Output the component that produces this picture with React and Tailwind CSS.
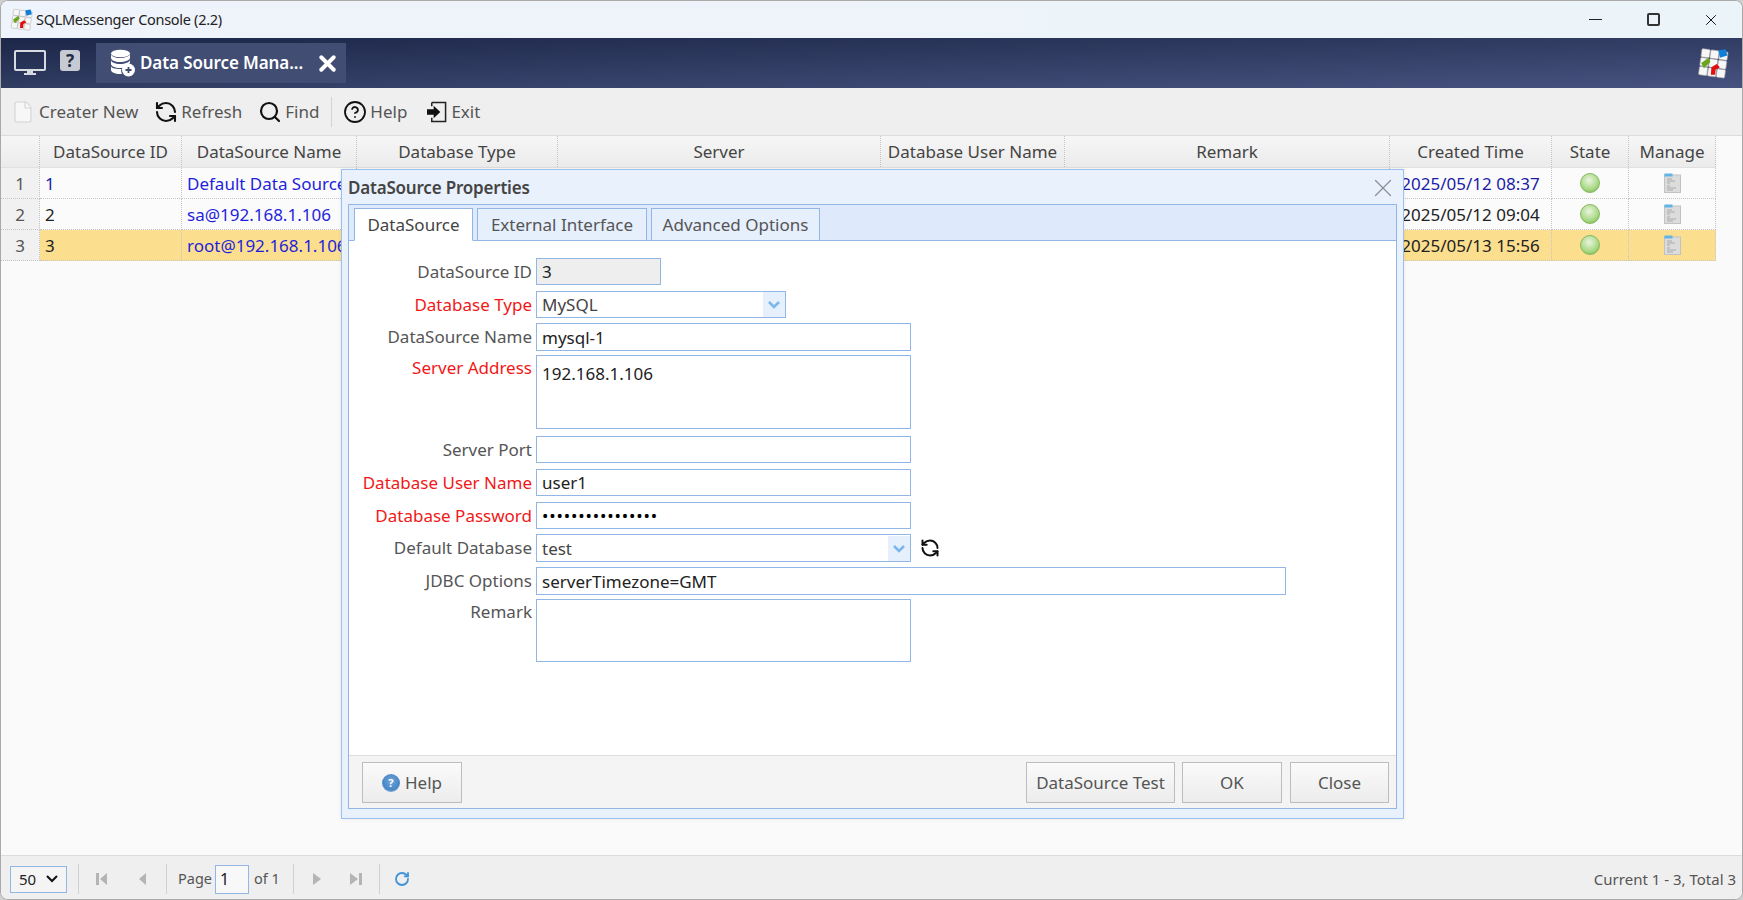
import React from "react";
import { RefreshCcw, Search, CircleHelp, File, X, RotateCw } from "lucide-react";

const cols = ["w-[39px]", "w-[142px]", "w-[175px]", "w-[201px]", "w-[323px]", "w-[184px]", "w-[325px]", "w-[162px]", "w-[77px]", "w-[87px]"];
const heads = ["", "DataSource ID", "DataSource Name", "Database Type", "Server", "Database User Name", "Remark", "Created Time", "State", "Manage"];

const rows = [
  { n: "1", id: "1", name: "Default Data Source", time: "2025/05/12 08:37", idC: "text-[#1c1ca8]", timeC: "text-[#1c1ca8]", bg: "bg-[#fbfbfb]" },
  { n: "2", id: "2", name: "sa@192.168.1.106", time: "2025/05/12 09:04", idC: "text-[#222]", timeC: "text-[#222]", bg: "bg-[#fbfbfb]" },
  { n: "3", id: "3", name: "root@192.168.1.106", time: "2025/05/13 15:56", idC: "text-[#222]", timeC: "text-[#222]", bg: "bg-[#fbdf8f]" },
];

function Logo({ size = 26 }) {
  const cells = [];
  for (let r = 0; r < 3; r++) for (let c = 0; c < 3; c++) cells.push([c, r]);
  return (
    <svg width={size} height={size} viewBox="0 0 30 30">
      <g transform="rotate(8 15 15)">
        {cells.map(([c, r]) => (
          <rect key={c + "-" + r} x={3 + c * 8.4} y={3 + r * 8.4} width="7.8" height="7.8" rx="1" fill="#f7f7f7" stroke="#a8a8a8" strokeWidth="0.6" />
        ))}
      </g>
      <path d="M20 3l7-1 1.500 6-7 2z" fill="#0f80d8" />
      <path d="M4 15l7-5 1.500 4-6 6z" fill="#6aa51c" />
      <path d="M13 26l.5-7 5-3 3 3-4 2-.5 5z" fill="#e30d0d" />
    </svg>
  );
}

function DbIcon() {
  return (
    <svg width="26" height="28" viewBox="0 0 26 28">
      <path d="M2 5v4c0 2 4 4 9 4s10-2 10-4V5c0 2-5 4-10 4S2 7 2 5z" fill="#fff" />
      <ellipse cx="11.5" cy="4.5" rx="9.5" ry="3.8" fill="#fff" />
      <path d="M2 11v4c0 2 4 4 9 4 2 0 4-.3 5-1l5-4v-3c0 2-5 4-10 4S2 13 2 11z" fill="#fff" />
      <path d="M2 17v4c0 2 4 4 9 4h2c-1-2-1-4-.5-5H11c-5 0-9-1-9-3z" fill="#fff" />
      <circle cx="19.5" cy="21" r="6.5" fill="#fff" />
      <path d="M16.5 21h6M19.5 18v6" stroke="#3f4c72" strokeWidth="1.8" />
    </svg>
  );
}

function ExitIcon() {
  return (
    <svg width="20" height="22" viewBox="0 0 21 22" className="-mr-[2px]">
      <path d="M5 1h14.5v20H5v-4M5 5V1" fill="none" stroke="#222" strokeWidth="1.6" />
      <path d="M0 8h7V4.5L14 11l-7 6.500V14H0z" fill="#111" />
    </svg>
  );
}

function ManageIcon() {
  return (
    <svg width="17" height="20" viewBox="0 0 17 20">
      <rect x="0.500" y="2" width="16" height="17.500" fill="#dcdcdc" stroke="#c2c2c2" />
      <rect x="0.500" y="0.500" width="8" height="3" fill="#62b4e6" />
      <path d="M3 6h5M3 8h8M3 10h3M3 13h3M3 15h9M3 17h6" stroke="#a4a4a4" strokeWidth="0.9" />
    </svg>
  );
}

function Ball() {
  return <div className="w-[20px] h-[20px] rounded-full border border-[#84b860] bg-[radial-gradient(circle_at_45%_35%,#e9f5de_0%,#a9d884_60%,#6aad3a_100%)]" />;
}

function ToolItem({ icon, label, className = "" }) {
  return (
    <div className={"flex items-center gap-[6px] text-[#555] " + className}>
      {icon}
      <span className="pt-[1px]">{label}</span>
    </div>
  );
}

function Chevron() {
  return (
    <svg width="14" height="10" viewBox="0 0 14 10">
      <path d="M2 2l5 5 5-5" fill="none" stroke="#79b7ec" strokeWidth="2.600" />
    </svg>
  );
}

function Row({ label, req, className = "", top, children }) {
  return (
    <div className={"flex " + className}>
      <div className={"w-[183px] mr-[4px] text-right leading-none " + (req ? "text-[#f01818] " : "text-[#555] ") + (top ? "pt-[2px]" : "self-center")}>
        <span className="inline-block leading-[22px]">{label}</span>
      </div>
      {children}
    </div>
  );
}

function Box({ className = "", children }) {
  return <div className={"border border-[#92b6e6] bg-white pl-[5px] flex items-center text-[#222] " + className}>{children}</div>;
}

function Combo({ className = "", children }) {
  return (
    <div className={"border border-[#92b6e6] bg-white flex items-stretch " + className}>
      <div className="flex-1 pl-[5px] flex items-center text-[#444]">{children}</div>
      <div className="w-[22px] bg-[#e6effc] flex items-center justify-center">
        <Chevron />
      </div>
    </div>
  );
}

function Btn({ className = "", children }) {
  return (
    <div className={"h-[41px] border border-[#bdbdbd] bg-[linear-gradient(to_bottom,#fafafa,#ececec)] flex items-center justify-center text-[#555] " + className}>
      {children}
    </div>
  );
}

function Tri({ d }) {
  return (
    <svg width="12" height="14" viewBox="0 0 12 14">
      <path d={d} fill="#b4b4b4" />
    </svg>
  );
}

function Dialog() {
  return (
    <div className="absolute left-[340px] top-[33px] w-[1063px] h-[650px] border border-[#9cc0ee] bg-[#e9f1fd] shadow-[0_0_4px_rgba(0,0,0,0.08)] flex flex-col">
      <div className="h-[34px] shrink-0 flex items-center justify-between pl-[6px] pr-[12px] pt-[2px]">
        <span className="text-[#444] font-semibold text-[17px] tracking-[-0.2px]">DataSource Properties</span>
        <X size={30} strokeWidth={1} className="text-[#8c9096] -m-[7px]" />
      </div>
      <div className="mx-[6px] mb-[9px] flex-1 border border-[#92b6e6] bg-white flex flex-col min-h-0">
        <div className="h-[36px] shrink-0 bg-[#deeafc] border-b border-[#92b6e6] flex items-end pl-[5px] gap-[4px]">
          <div className="w-[119px] h-[33px] -mb-px border border-[#92b6e6] border-b-white bg-white flex items-center justify-center pt-[1px] text-[#444]">DataSource</div>
          <div className="w-[170px] h-[33px] -mb-px border border-[#92b6e6] bg-[#e6effc] flex items-center justify-center pt-[1px] text-[#555]">External Interface</div>
          <div className="w-[169px] h-[33px] -mb-px border border-[#92b6e6] bg-[#e6effc] flex items-center justify-center pt-[1px] text-[#555]">Advanced Options</div>
        </div>
        <div className="flex-1 pt-[17px] min-h-0">
          <Row label="DataSource ID">
            <Box className="w-[125px] h-[27px] !bg-[#eeeeee]">3</Box>
          </Row>
          <Row label="Database Type" req className="mt-[6px]">
            <Combo className="w-[250px] h-[27px]">MySQL</Combo>
          </Row>
          <Row label="DataSource Name" className="mt-[5px]">
            <Box className="w-[375px] h-[28px] pt-[1px]">mysql-1</Box>
          </Row>
          <Row label="Server Address" req top className="mt-[4px]">
            <Box className="w-[375px] h-[74px] !items-start pt-[5px]">192.168.1.106</Box>
          </Row>
          <Row label="Server Port" className="mt-[7px]">
            <Box className="w-[375px] h-[27px]" />
          </Row>
          <Row label="Database User Name" req className="mt-[6px]">
            <Box className="w-[375px] h-[27px]">user1</Box>
          </Row>
          <Row label="Database Password" req className="mt-[6px]">
            <Box className="w-[375px] h-[27px]">
              <span className="text-[17px] tracking-[0.850px] text-black">••••••••••••••••</span>
            </Box>
          </Row>
          <Row label="Default Database" className="mt-[5px]">
            <Combo className="w-[375px] h-[28px] pt-[1px]">test</Combo>
            <RefreshCcw size={20} strokeWidth={2.400} className="ml-[9px] self-center text-[#111]" />
          </Row>
          <Row label="JDBC Options" className="mt-[5px]">
            <Box className="w-[750px] h-[28px] pt-[1px]">serverTimezone=GMT</Box>
          </Row>
          <Row label="Remark" top className="mt-[4px]">
            <Box className="w-[375px] h-[63px]" />
          </Row>
        </div>
        <div className="h-[53px] shrink-0 bg-[#f4f4f4] border-t border-[#dddddd] flex items-start pt-[6px] pl-[13px] pr-[7px]">
          <Btn className="w-[100px] gap-[5px]">
            <span className="w-[18px] h-[18px] rounded-full bg-[radial-gradient(circle_at_50%_40%,#6fa5dc,#4a87c6_60%,#b4cfea)] flex items-center justify-center text-white text-[11px] font-bold leading-none">?</span>
            Help
          </Btn>
          <Btn className="w-[149px] ml-auto">DataSource Test</Btn>
          <Btn className="w-[100px] ml-[7px]">OK</Btn>
          <Btn className="w-[99px] ml-[8px]">Close</Btn>
        </div>
      </div>
    </div>
  );
}

export default function App() {
  return (
    <div className="w-[1743px] h-[900px] bg-[#cfcfcf] overflow-hidden" style={{ fontFamily: '"Noto Sans", "Open Sans", sans-serif' }}>
      <div className="w-full h-full rounded-[8px] border border-[#a9a9a9] overflow-hidden flex flex-col text-[17px] bg-[#fafafa]">
        {/* title bar */}
        <div className="h-[37px] shrink-0 bg-[linear-gradient(to_right,#eff3fb,#ebf4f8)] flex items-center pl-[9px] text-[14.500px] tracking-[-0.3px] text-[#222]">
          <Logo size={23} />
          <span className="ml-[3px]">SQLMessenger Console (2.2)</span>
          <div className="ml-auto flex items-center pr-[2px]">
            <div className="w-[58px] flex justify-center">
              <div className="w-[13px] border-t border-[#222]" />
            </div>
            <div className="w-[58px] flex justify-center">
              <div className="w-[13px] h-[13px] rounded-[2px] border-2 border-[#333]" />
            </div>
            <div className="w-[58px] flex justify-center">
              <X size={18} strokeWidth={1.300} className="text-[#111]" />
            </div>
          </div>
        </div>
        {/* header */}
        <div className="h-[50px] shrink-0 bg-[linear-gradient(to_bottom_right,#1c2648,#47537f)] flex items-center pl-[13px] pr-[13px]">
          <svg width="32" height="26" viewBox="0 0 32 26">
            <rect x="1" y="1" width="30" height="19" rx="1" fill="none" stroke="#d7dae0" strokeWidth="2" />
            <path d="M13 21h6v2h3v2H10v-2h3z" fill="#d7dae0" />
          </svg>
          <div className="ml-[14px] w-[20px] h-[21px] rounded-[3px] bg-[#c6cad2] text-[#222b45] text-[17px] font-bold leading-none flex items-center justify-center -mt-[5px]">?</div>
          <div className="ml-[16px] w-[250px] h-[40px] bg-[#414d72] flex items-center pl-[13px] text-white font-semibold text-[17px] tracking-[-0.1px]">
            <DbIcon />
            <span className="ml-[5px]">Data Source Mana...</span>
            <X size={25} strokeWidth={3.800} className="ml-[12px] shrink-0" />
          </div>
          <div className="ml-auto">
            <Logo size={32} />
          </div>
        </div>
        {/* toolbar */}
        <div className="h-[48px] shrink-0 bg-[#efefef] border-b border-[#dcdcdc] flex items-center pl-[12px]">
          <ToolItem icon={<File size={24} strokeWidth={1.100} className="-mx-[2px] text-[#d4d4d4] fill-[#f7f7f7]" />} label="Creater New" />
          <ToolItem className="ml-[18px]" icon={<RefreshCcw size={24} strokeWidth={2.100} className="-ml-[2px] -mr-[3px] text-[#111]" />} label="Refresh" />
          <ToolItem className="ml-[18px]" icon={<Search size={24} strokeWidth={2.200} className="-ml-[2px] -mr-[3px] text-[#111]" />} label="Find" />
          <div className="ml-[12px] w-px h-[30px] bg-[#d4d4d4]" />
          <ToolItem className="ml-[13px]" icon={<CircleHelp size={24} strokeWidth={1.800} className="-ml-[2px] -mr-[3px] text-[#111]" />} label="Help" />
          <ToolItem className="ml-[20px]" icon={<ExitIcon />} label="Exit" />
        </div>
        {/* grid */}
        <div className="relative flex-1 min-h-0">
          <div className="flex h-[32px] w-[1715px] bg-[linear-gradient(to_bottom,#f6f6f6,#ebebeb)] border-b border-[#e0e0e0]">
            {heads.map((h, i) => (
              <div key={i} className={cols[i] + " shrink-0 border-r border-dotted border-[#c4c4c4] flex items-center justify-center pt-[1px] text-[#444]"}>
                {h}
              </div>
            ))}
          </div>
          {rows.map((r) => (
            <div key={r.n} className="flex h-[31px] w-[1715px]">
              <div className={cols[0] + " shrink-0 bg-[#f1f1f1] border-r border-b border-dotted border-[#c4c4c4] flex items-center justify-center pt-[1px] text-[#555]"}>{r.n}</div>
              <div className={cols[1] + " shrink-0 border-r border-b border-dotted border-[#c4c4c4] flex items-center pl-[5px] pt-[1px] " + r.bg + " " + r.idC}>{r.id}</div>
              <div className={cols[2] + " shrink-0 border-r border-b border-dotted border-[#c4c4c4] flex items-center pl-[5px] pt-[1px] whitespace-nowrap overflow-hidden text-[#1f1fdc] " + r.bg}>{r.name}</div>
              <div className={cols[3] + " shrink-0 border-b border-dotted border-[#c4c4c4] " + r.bg} />
              <div className={cols[4] + " shrink-0 border-b border-dotted border-[#c4c4c4] " + r.bg} />
              <div className={cols[5] + " shrink-0 border-b border-dotted border-[#c4c4c4] " + r.bg} />
              <div className={cols[6] + " shrink-0 border-r border-b border-dotted border-[#c4c4c4] " + r.bg} />
              <div className={cols[7] + " shrink-0 border-r border-b border-dotted border-[#c4c4c4] flex items-center justify-center pt-[1px] whitespace-nowrap overflow-hidden " + r.bg + " " + r.timeC}>{r.time}</div>
              <div className={cols[8] + " shrink-0 border-r border-b border-dotted border-[#c4c4c4] flex items-center justify-center " + r.bg}>
                <Ball />
              </div>
              <div className={cols[9] + " shrink-0 border-r border-b border-dotted border-[#c4c4c4] flex items-center justify-center " + r.bg}>
                <ManageIcon />
              </div>
            </div>
          ))}
          <Dialog />
        </div>
        {/* pager */}
        <div className="h-[44px] shrink-0 bg-[#efefef] border-t border-[#dcdcdc] flex items-center pt-[3px] pl-[9px] pr-[6px] text-[14.500px] text-[#555]">
          <div className="w-[57px] h-[27px] border border-[#92b6e6] bg-[#f4f4f4] flex items-center justify-between px-[8px] text-[#222] text-[15px]">
            50
            <svg width="12" height="8" viewBox="0 0 12 8">
              <path d="M1 1l5 5 5-5" fill="none" stroke="#111" strokeWidth="2" />
            </svg>
          </div>
          <div className="ml-[11px] w-px h-[30px] bg-[#d0d0d0]" />
          <div className="ml-[17px]">
            <Tri d="M0 1h3v12H0zM11 1v12L4 7z" />
          </div>
          <div className="ml-[29px]">
            <Tri d="M9 1v12L2 7z" />
          </div>
          <div className="ml-[17px] w-px h-[30px] bg-[#d0d0d0]" />
          <span className="ml-[11px]">Page</span>
          <div className="ml-[3px] w-[34px] h-[29px] border border-[#92b6e6] bg-[#f8f8f8] flex items-center pl-[4px] text-[#222] text-[16px]">1</div>
          <span className="ml-[5px]">of 1</span>
          <div className="ml-[13px] w-px h-[30px] bg-[#d0d0d0]" />
          <div className="ml-[18px]">
            <Tri d="M1 1v12l8-6z" />
          </div>
          <div className="ml-[26px]">
            <Tri d="M0 1v12l8-6zM9 1h3v12H9z" />
          </div>
          <div className="ml-[17px] w-px h-[30px] bg-[#d0d0d0]" />
          <RotateCw size={16} strokeWidth={2.700} className="ml-[14px] text-[#3f93d6]" />
          <span className="ml-auto text-[15px] text-[#555]">Current 1 - 3, Total 3</span>
        </div>
      </div>
    </div>
  );
}
